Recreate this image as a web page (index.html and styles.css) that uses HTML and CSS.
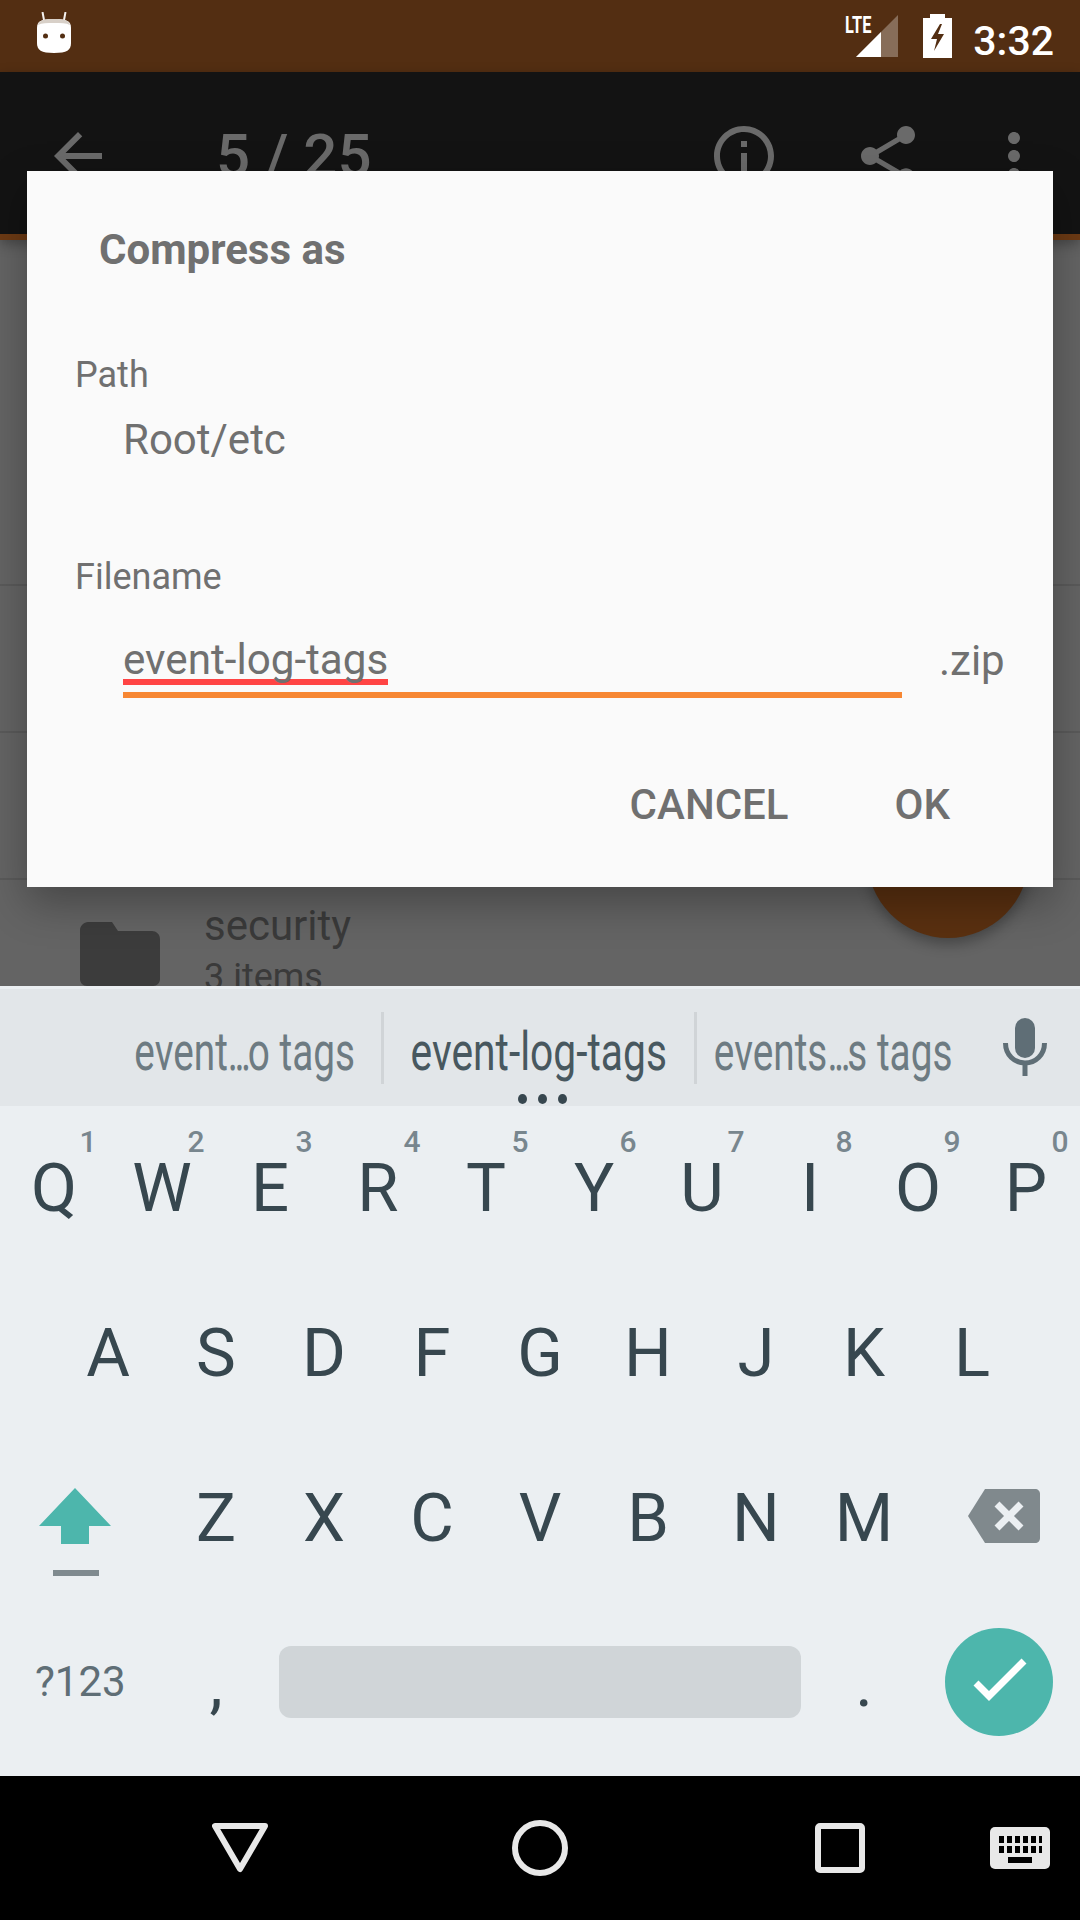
FILE: index.html
```html
<!DOCTYPE html>
<html lang="en">
<head>
  <meta charset="UTF-8">
  <meta name="viewport" content="width=device-width, initial-scale=1.0">
  <title>Compress as</title>
  <link rel="stylesheet" href="styles.css">
</head>
<body>
<div class="phone">
  <div class="status">
    <svg class="droid" width="34" height="41" viewBox="0 0 34 41">
      <path d="M7 8 5.500 0M27 8l1.500-8" stroke="#f4f1ee" stroke-width="2"/>
      <path d="M0 16C0 9 4 7 17 7s17 2 17 9v15c0 7-4 10-17 10S0 38 0 31z" fill="#fff"/>
      <path d="M1 13c1-5 6-6 16-6s15 1 16 6c-4-2-9-2-16-2s-12 0-16 2z" fill="#d8d0c8"/>
      <circle cx="8.500" cy="24" r="2.500" fill="#532e12"/>
      <circle cx="25.500" cy="24" r="2.500" fill="#532e12"/>
    </svg>
    <div class="status-right">
      <div class="signal">
        <span class="lte">LTE</span>
        <svg width="42" height="42" viewBox="0 0 42 42">
          <path d="M42 0v42H0z" fill="#fff" fill-opacity=".3"/>
          <path d="M25 17v25H0z" fill="#fff"/>
        </svg>
      </div>
      <svg class="battery" width="29" height="44" viewBox="0 0 29 44">
        <path d="M7 0h15v4h7v40H0V4h7z" fill="#fff"/>
        <path d="M17 10 8 25h6l-3 12 10-17h-6l4-10z" fill="#532e12"/>
      </svg>
      <span class="clock">3:32</span>
    </div>
  </div>

  <div class="toolbar">
    <svg class="tool-icon" width="72" height="72" viewBox="0 0 24 24"><path d="M20 11H7.830l5.590-5.590L12 4l-8 8 8 8 1.410-1.410L7.830 13H20v-2z"/></svg>
    <span class="counter">5 / 25</span>
    <svg class="tool-icon info" width="72" height="72" viewBox="0 0 24 24"><path d="M11 7h2v2h-2zm0 4h2v6h-2zm1-9C6.480 2 2 6.480 2 12s4.480 10 10 10 10-4.480 10-10S17.520 2 12 2zm0 18c-4.410 0-8-3.590-8-8s3.590-8 8-8 8 3.590 8 8-3.590 8-8 8z"/></svg>
    <svg class="tool-icon share" width="72" height="72" viewBox="0 0 24 24"><path d="M18 16.080c-.76 0-1.440.3-1.960.77L8.910 12.700c.05-.23.09-.46.09-.7s-.04-.47-.09-.7l7.050-4.110c.54.5 1.250.81 2.040.81 1.660 0 3-1.340 3-3s-1.340-3-3-3-3 1.340-3 3c0 .24.04.47.09.7L8.040 9.810C7.500 9.310 6.790 9 6 9c-1.660 0-3 1.340-3 3s1.340 3 3 3c.79 0 1.500-.31 2.040-.81l7.120 4.160c-.05.21-.08.43-.08.65 0 1.610 1.310 2.920 2.920 2.920 1.610 0 2.920-1.310 2.920-2.920s-1.310-2.920-2.920-2.920z"/></svg>
    <svg class="tool-icon more" width="72" height="72" viewBox="0 0 24 24"><path d="M12 8c1.100 0 2-.9 2-2s-.9-2-2-2-2 .9-2 2 .9 2 2 2zm0 2c-1.100 0-2 .9-2 2s.9 2 2 2 2-.9 2-2-.9-2-2-2zm0 6c-1.100 0-2 .9-2 2s.9 2 2 2 2-.9 2-2-.9-2-2-2z"/></svg>
  </div>

  <div class="content">
    <div class="list-row"></div>
    <div class="list-row"></div>
    <div class="list-row"></div>
    <div class="list-row last">
      <svg class="folder" width="80" height="64" viewBox="0 0 80 64"><path d="M8 0h24l6 9h34c4 0 8 3 8 8v40c0 4-3 7-7 7H7c-4 0-7-3-7-7V8c0-4 4-8 8-8z"/></svg>
      <div class="row-text">
        <div class="row-name">security</div>
        <div class="row-sub">3 items</div>
      </div>
    </div>
    <div class="fab"></div>
  </div>

  <div class="dialog">
    <div class="dialog-title">Compress as</div>
    <div class="field-label path-label">Path</div>
    <div class="path-value">Root/etc</div>
    <div class="field-label name-label">Filename</div>
    <div class="name-row">
      <div class="name-input"><span class="typed">event-log-tags</span></div>
      <span class="ext">.zip</span>
    </div>
    <div class="actions">
      <span class="action">CANCEL</span>
      <span class="action">OK</span>
    </div>
  </div>

  <div class="keyboard">
    <div class="suggestions">
      <div class="sug sug-left"><span>event<b>...</b>o tags</span></div>
      <div class="sug sug-mid"><span>event-log-tags</span></div>
      <div class="sug sug-right"><span>events<b>...</b>s tags</span></div>
      <svg class="mic" width="44" height="58" viewBox="0 0 44 58">
        <rect x="12" y="0" width="20" height="40" rx="10" fill="#5f6e76"/>
        <path d="M2.500 25c0 12 9 20 19.500 20s19.500-8 19.500-20M22 45v13" fill="none" stroke="#5f6e76" stroke-width="5"/>
      </svg>
      <div class="more-dots"><i></i><i></i><i></i></div>
    </div>
    <div class="keys">
      <div class="key-row">
        <div class="key">Q<sup>1</sup></div>
        <div class="key">W<sup>2</sup></div>
        <div class="key">E<sup>3</sup></div>
        <div class="key">R<sup>4</sup></div>
        <div class="key">T<sup>5</sup></div>
        <div class="key">Y<sup>6</sup></div>
        <div class="key">U<sup>7</sup></div>
        <div class="key">I<sup>8</sup></div>
        <div class="key">O<sup>9</sup></div>
        <div class="key">P<sup>0</sup></div>
      </div>
      <div class="key-row">
        <div class="key">A</div>
        <div class="key">S</div>
        <div class="key">D</div>
        <div class="key">F</div>
        <div class="key">G</div>
        <div class="key">H</div>
        <div class="key">J</div>
        <div class="key">K</div>
        <div class="key">L</div>
      </div>
      <div class="key-row">
        <div class="key wide shift">
          <svg width="72" height="88" viewBox="0 0 72 88">
            <path d="M36 0 72 38H50v18H22V38H0z" fill="#4db6ac"/>
            <rect x="14" y="82" width="46" height="6" fill="#7f8a8f"/>
          </svg>
        </div>
        <div class="key">Z</div>
        <div class="key">X</div>
        <div class="key">C</div>
        <div class="key">V</div>
        <div class="key">B</div>
        <div class="key">N</div>
        <div class="key">M</div>
        <div class="key wide del">
          <svg width="72" height="54" viewBox="0 0 72 54">
            <path d="M17 0h50c3 0 5 2 5 5v44c0 3-2 5-5 5H17L0 27z" fill="#80898d"/>
            <path d="M29 15l24 24M53 15 29 39" stroke="#ebeff2" stroke-width="7"/>
          </svg>
        </div>
      </div>
      <div class="key-row bottom">
        <div class="key wide sym">?123</div>
        <div class="key">,</div>
        <div class="space"></div>
        <div class="key">.</div>
        <div class="enter">
          <svg width="108" height="108" viewBox="0 0 108 108">
            <circle cx="54" cy="54" r="54" fill="#4db6ac"/>
            <path d="M31 55 44 68 79 33" fill="none" stroke="#fff" stroke-width="7"/>
          </svg>
        </div>
      </div>
    </div>
  </div>

  <div class="navbar">
    <svg width="56" height="50" viewBox="0 0 56 50"><path d="M3 3h50L28 46z" fill="none" stroke="#e8e8e8" stroke-width="6" stroke-linejoin="round"/></svg>
    <svg class="nav-home" width="56" height="56" viewBox="0 0 56 56"><circle cx="28" cy="28" r="25" fill="none" stroke="#e8e8e8" stroke-width="6"/></svg>
    <svg class="nav-recent" width="50" height="50" viewBox="0 0 50 50"><rect x="3" y="3" width="44" height="44" rx="2" fill="none" stroke="#e8e8e8" stroke-width="6"/></svg>
    <svg class="nav-keys" width="60" height="42" viewBox="0 0 60 42">
      <rect width="60" height="42" rx="5" fill="#e8e8e8"/>
      <path d="M9 9h5v7H9zm8 0h5v7h-5zm8 0h5v7h-5zm8 0h5v7h-5zm8 0h5v7h-5zm8 0h3v7h-3zM9 19h5v7H9zm8 0h5v7h-5zm8 0h5v7h-5zm8 0h5v7h-5zm8 0h5v7h-5zm8 0h3v7h-3zM18 30h24v6H18z" fill="#000"/>
    </svg>
  </div>
</div>
</body>
</html>
```

FILE: styles.css
```css
* {
  box-sizing: border-box;
}
body {
  margin: 0;
  font-family: Roboto, "Liberation Sans", sans-serif;
}
.phone {
  position: relative;
  width: 1080px;
  height: 1920px;
  overflow: hidden;
  display: flex;
  flex-direction: column;
  background: #000;
}

/* status bar */
.status {
  height: 72px;
  flex: none;
  background: #532e12;
  display: flex;
  justify-content: space-between;
  align-items: flex-start;
  padding: 12px 26px 0 37px;
}
.status-right {
  display: flex;
  align-items: flex-start;
}
.signal {
  position: relative;
  width: 42px;
  height: 42px;
  margin-top: 3px;
}
.signal svg {
  display: block;
}
.lte {
  position: absolute;
  left: -11px;
  top: 1px;
  font-size: 24px;
  line-height: 18px;
  font-weight: 700;
  color: #fff;
  transform: scaleX(.68);
  transform-origin: left top;
}
.battery {
  margin-left: 25px;
  margin-top: 2px;
}
.clock {
  margin-left: 21px;
  margin-top: 9px;
  font-size: 41px;
  line-height: 40px;
  font-weight: 500;
  color: #fff;
}

/* toolbar behind the dialog */
.toolbar {
  height: 168px;
  flex: none;
  background: #131313;
  border-bottom: 6px solid #6c3a14;
  display: flex;
  align-items: flex-start;
  padding: 48px 0 0 42px;
  position: relative;
  z-index: 1;
  box-shadow: 0 4px 12px rgba(0, 0, 0, .3);
}
.tool-icon {
  flex: none;
  fill: #6a6a6a;
}
.counter {
  margin-left: 102px;
  font-size: 60px;
  line-height: 72px;
  font-weight: 500;
  color: #6a6a6a;
}
.info {
  margin-left: 336px;
}
.share {
  margin-left: 72px;
}
.more {
  margin-left: 54px;
}

/* dimmed list */
.content {
  flex: 1;
  position: relative;
  background: #646464;
  overflow: hidden;
}
.list-row {
  height: 147px;
  border-bottom: 2px solid #5a5a5a;
}
.list-row:first-child {
  height: 346px;
}
.list-row.last {
  border-bottom: none;
  display: flex;
  padding: 42px 0 0 80px;
}
.folder {
  fill: #3c3c3c;
  flex: none;
}
.row-text {
  margin-left: 44px;
  margin-top: -21px;
  color: #3a3a3a;
}
.row-name {
  font-size: 42px;
  line-height: 50px;
}
.row-sub {
  margin-top: 5px;
  font-size: 36px;
  line-height: 42px;
}
.fab {
  position: absolute;
  left: 867px;
  top: 536px;
  width: 162px;
  height: 162px;
  border-radius: 50%;
  background: #5a3010;
  box-shadow: 0 6px 14px rgba(0, 0, 0, .3);
}

/* dialog */
.dialog {
  position: absolute;
  z-index: 3;
  left: 27px;
  top: 171px;
  width: 1026px;
  height: 716px;
  background: #fafafa;
  color: #707070;
  box-shadow: 0 16px 40px rgba(0, 0, 0, .3);
}
.dialog-title {
  padding: 55px 0 0 72px;
  font-size: 42px;
  line-height: 48px;
  font-weight: 700;
}
.field-label {
  padding-left: 48px;
  font-size: 36px;
  line-height: 44px;
}
.path-label {
  margin-top: 79px;
}
.path-value {
  margin-top: 18px;
  padding-left: 96px;
  font-size: 42px;
  line-height: 50px;
}
.name-label {
  margin-top: 90px;
}
.name-row {
  margin-top: 35px;
  margin-left: 96px;
  display: flex;
  align-items: flex-start;
}
.name-input {
  width: 779px;
  height: 64px;
  border-bottom: 6px solid #f78733;
}
.typed {
  display: inline-block;
  height: 51px;
  line-height: 52px;
  font-size: 42.200px;
  border-bottom: 6px solid #ff4444;
}
.ext {
  margin-left: 37px;
  margin-top: 2px;
  font-size: 42px;
  line-height: 50px;
}
.actions {
  margin-top: 82px;
  padding-right: 103px;
  display: flex;
  justify-content: flex-end;
  gap: 106px;
}
.action {
  font-size: 42px;
  line-height: 50px;
  font-weight: 500;
}

/* keyboard */
.keyboard {
  height: 790px;
  flex: none;
  background: #ebeff2;
  position: relative;
  z-index: 2;
  display: flex;
  flex-direction: column;
}
.suggestions {
  height: 117px;
  flex: none;
  margin-top: 3px;
  background: #e2e6e9;
  display: flex;
  position: relative;
  color: #6d7b82;
}
.sug {
  height: 72px;
  margin-top: 23px;
  display: flex;
  align-items: center;
  justify-content: center;
  white-space: nowrap;
  font-size: 54px;
}
.sug span {
  display: inline-block;
  transform: scaleX(.718);
  margin-top: 6px;
}
.sug b {
  font-weight: 400;
  letter-spacing: -5px;
}
.sug-left {
  width: 384px;
  padding-left: 108px;
  border-right: 3px solid #d0d4d7;
}
.sug-mid {
  width: 313px;
  color: #48585f;
  border-right: 3px solid #d0d4d7;
}
.sug-mid span {
  transform: scaleX(.755);
}
.sug-right {
  width: 262px;
  padding-left: 10px;
}
.mic {
  margin: 29px 0 0 44px;
}
.more-dots {
  position: absolute;
  left: 518px;
  top: 105px;
  display: flex;
  gap: 11px;
}
.more-dots i {
  width: 9px;
  height: 10px;
  border-radius: 50%;
  background: #37474f;
}
.keys {
  margin-top: 3px;
  flex: 1;
}
.key-row {
  height: 165px;
  display: flex;
  justify-content: center;
}
.key {
  position: relative;
  width: 108px;
  flex: none;
  text-align: center;
  color: #37474f;
  font-size: 67px;
  line-height: 78px;
  padding-top: 40px;
}
.key sup {
  position: absolute;
  left: 73px;
  top: 18px;
  width: 30px;
  font-size: 30px;
  line-height: 30px;
  font-weight: 500;
  color: #78868e;
}
.key.wide {
  width: 162px;
  padding-top: 0;
}
.shift svg {
  display: block;
  margin: 49px 0 0 39px;
}
.del svg {
  display: block;
  margin: 50px 0 0 50px;
}
.bottom {
  justify-content: flex-start;
  align-items: flex-start;
}
.key.sym {
  padding-top: 53px;
  font-size: 42px;
  line-height: 50px;
  color: #5f6e76;
  text-align: left;
  padding-left: 35px;
}
.space {
  width: 522px;
  height: 72px;
  flex: none;
  margin-top: 41.500px;
  background: #d0d5d8;
  border-radius: 12px;
  margin-left: 9px;
  margin-right: 9px;
}
.enter {
  margin-left: 27px;
  margin-top: 23.500px;
}
.enter svg {
  display: block;
}

/* navigation bar */
.navbar {
  height: 144px;
  flex: none;
  background: #000;
  display: flex;
  align-items: center;
  padding-left: 212px;
}
.navbar svg {
  flex: none;
}
.nav-home {
  margin-left: 244px;
}
.nav-recent {
  margin-left: 247px;
}
.nav-keys {
  margin-left: 125px;
}
```
